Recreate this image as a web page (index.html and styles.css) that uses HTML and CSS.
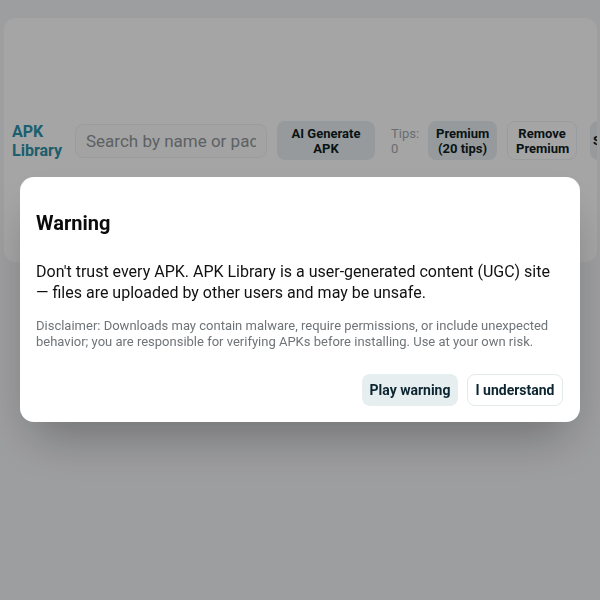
FILE: index.html
```html
<!DOCTYPE html>
<html lang="en">
<head>
<meta charset="utf-8">
<title>APK Library</title>
<link rel="stylesheet" href="styles.css">
</head>
<body>
<div class="page">
  <div class="card">
    <header class="topbar">
      <div class="brand">APK<br>Library</div>
      <input class="search" type="text" placeholder="Search by name or package">
      <button class="tbtn filled ai">AI Generate<br>APK</button>
      <div class="tips">Tips:<br>0</div>
      <button class="tbtn filled prem">Premium<br>(20 tips)</button>
      <button class="tbtn outline rem">Remove<br>Premium</button>
      <button class="tbtn filled more">Sign in</button>
    </header>
  </div>
</div>

<div class="overlay">
  <div class="modal" role="dialog" aria-labelledby="wtitle">
    <h2 id="wtitle" class="mtitle">Warning</h2>
    <p class="mbody">Don't trust every APK. APK Library is a user-generated content (UGC) site — files are uploaded by other users and may be unsafe.</p>
    <p class="mnote">Disclaimer: Downloads may contain malware, require permissions, or include unexpected behavior; you are responsible for verifying APKs before installing. Use at your own risk.</p>
    <div class="mactions">
      <button class="mbtn soft">Play warning</button>
      <button class="mbtn line">I understand</button>
    </div>
  </div>
</div>
</body>
</html>
```

FILE: styles.css
```css
* { box-sizing: border-box; }
html, body { margin: 0; padding: 0; }
body {
  width: 600px;
  height: 600px;
  overflow: hidden;
  background: #f2f3f6;
  font-family: Roboto, "Noto Sans", Arial, sans-serif;
}
.page {
  padding-top: 18px;
  padding-left: 4px;
  padding-right: 3px;
}
.card {
  background: #fdfdfd;
  border-radius: 12px;
  height: 244px;
  padding: 103px 0 0 8px;
  overflow: hidden;
}
.topbar {
  display: flex;
  align-items: center;
  gap: 10px;
  white-space: nowrap;
}
.brand {
  color: #2b93a9;
  font-weight: 700;
  font-size: 16px;
  line-height: 19px;
  width: 53px;
  flex-shrink: 0;
}
.search {
  width: 192px;
  height: 34px;
  border: 1px solid #eceef0;
  background: #fbfbfc;
  border-radius: 8px;
  padding: 0 10px;
  font-family: inherit;
  font-size: 17px;
  color: #333;
  outline: none;
  flex-shrink: 0;
}
.search::placeholder { color: #8f9599; }
.tbtn {
  font-family: inherit;
  font-size: 13px;
  font-weight: 700;
  line-height: 15px;
  color: #0e1c22;
  border-radius: 8px;
  height: 39px;
  padding: 0 8px;
  text-align: center;
  flex-shrink: 0;
}
.tbtn.filled { background: #e8edf0; border: none; }
.tbtn.outline { background: #fdfdfd; border: 1px solid #eceff1; }
.ai { width: 98px; }
.prem { width: 69px; }
.rem { width: 70px; }
.more { width: 60px; text-align: left; padding-left: 3px; margin-left: 3px; }
.tips {
  color: #a3aaae;
  font-size: 13px;
  line-height: 15px;
  width: 27px;
  margin-left: 6px;
  flex-shrink: 0;
}
.overlay {
  position: fixed;
  inset: 0;
  background: rgba(0, 0, 0, 0.35);
}
.modal {
  position: absolute;
  left: 20px;
  top: 177px;
  width: 560px;
  background: #ffffff;
  border-radius: 14px;
  padding: 32px 16px 16px;
  box-shadow: 0 25px 50px -12px rgba(0, 0, 0, 0.3);
}
.mtitle {
  margin: 0;
  font-size: 20px;
  line-height: 28px;
  font-weight: 700;
  color: #0b0b0b;
}
.mbody {
  margin: 24px 0 0;
  font-size: 16px;
  line-height: 21px;
  color: #111;
}
.mnote {
  margin: 15px 0 0;
  font-size: 13px;
  line-height: 16px;
  color: #6f7478;
}
.mactions {
  margin-top: 24px;
  display: flex;
  justify-content: flex-end;
  gap: 9px;
  padding-right: 1px;
}
.mbtn {
  height: 32px;
  width: 96px;
  border-radius: 8px;
  font-family: inherit;
  font-size: 14px;
  font-weight: 700;
  color: #0c2530;
}
.mbtn.soft { background: #e7eef0; border: none; }
.mbtn.line { background: #fff; border: 1px solid #e4e9eb; }
```
